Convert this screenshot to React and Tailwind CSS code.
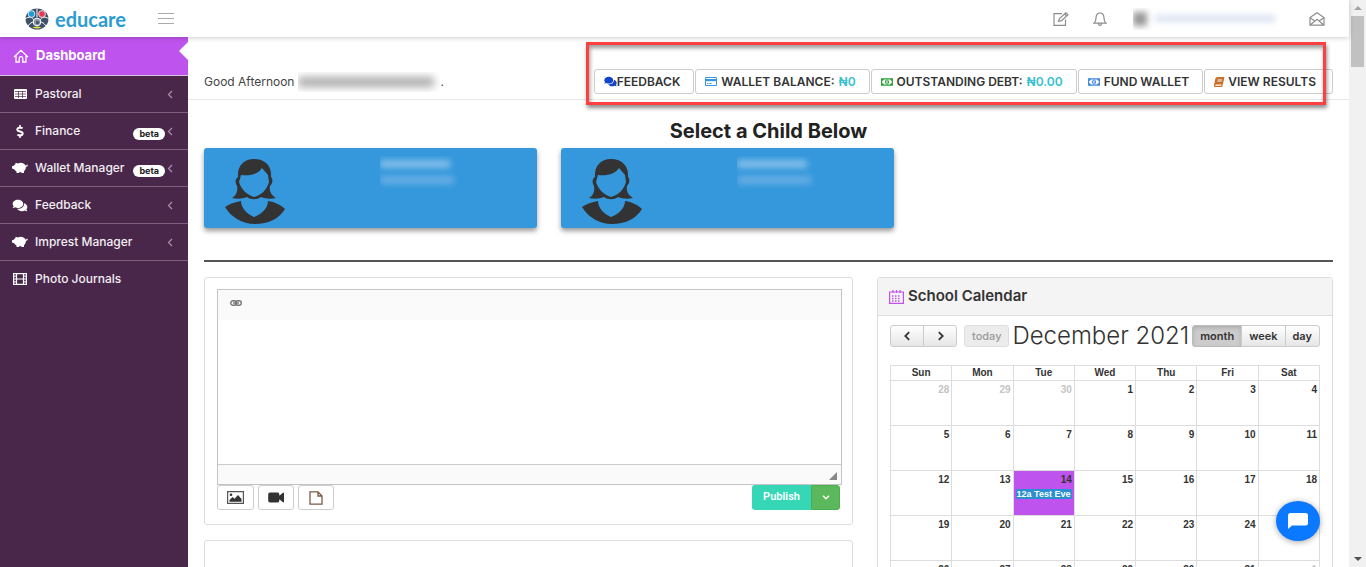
import React, { useState } from "react";
import { FaComments, FaDollarSign, FaBook } from "react-icons/fa";

const HomeIcon = () => (
  <svg viewBox="0 0 16 16" className="w-4 h-4" fill="none" stroke="currentColor" strokeWidth="1.3">
    <path d="M1 9 8 2.3 15 9M3 7.5V14h3.2v-3.6a1.8 1.8 0 0 1 3.6 0V14H13V7.5" />
  </svg>
);

const TableIcon = () => (
  <svg viewBox="0 0 13 10" className="w-[13px] h-[10px]">
    <rect width="13" height="10" rx="1" fill="currentColor" />
    <path stroke="#49274a" strokeWidth=".7" d="M1 2.500h11M1 5h11M1 7.500h11M4.500 2v7M8.500 2v7" />
  </svg>
);

const PiggyIcon = () => (
  <svg viewBox="0 0 16 12" className="w-4 h-3" fill="currentColor">
    <path d="M3.500.8 6 1.600C8 .2 12 .6 13.500 3.400c.7.4 1.300 0 1.300-.8l1 .3c0 1.200-.8 1.900-1.900 1.900 0 2-.7 3.400-1.900 4.500V11H9.500v-.7H7V11H4.500V9.600C3.500 9 2.700 8.200 2.200 7.300L0 6.500V4.200l1.800-.4c.5-.8 1-1.300 1.700-1.700Z" />
  </svg>
);

const FilmIcon = () => (
  <svg viewBox="0 0 14 12" className="w-[14px] h-3">
    <path fill="none" stroke="currentColor" strokeWidth="1.200" d="M.6.6h12.800v10.800H.6ZM3.500.6v10.800M10.500.6v10.800M3.500 6h7" />
    <path stroke="currentColor" strokeWidth="1" d="M.6 3.200h2.900M.6 6h2.900M.6 8.800h2.900M10.500 3.200h2.900M10.500 6h2.900M10.500 8.800h2.900" />
  </svg>
);

const VideoIcon = () => (
  <svg viewBox="0 0 16 11" className="w-4 h-[11px]" fill="#333">
    <path d="M2 .5h7.500a1.800 1.800 0 0 1 1.800 1.800v1.500L15 .8h1v9.400h-1l-3.700-3v1.500a1.800 1.800 0 0 1-1.800 1.800H2A1.800 1.800 0 0 1 .2 8.700V2.300A1.800 1.800 0 0 1 2 .5Z" />
  </svg>
);

const Chevron = ({ className, d = "M5 1 1.500 4.500 5 8" }) => (
  <svg viewBox="0 0 7 9" className={className} fill="none" stroke="currentColor" strokeWidth="1.200">
    <path d={d} />
  </svg>
);

const MoneyIcon = ({ className }) => (
  <svg viewBox="0 0 16 10" className={`mr-1 w-3 h-2 shrink-0 ${className}`}>
    <path fill="none" stroke="currentColor" strokeWidth="1.500" d="M.8.8h14.400v8.400H.8Z" />
    <path fill="currentColor" d="M1 1h3a3 3 0 0 1-3 2.500ZM15 1h-3a3 3 0 0 0 3 2.500ZM1 9h3a3 3 0 0 0-3-2.500ZM15 9h-3a3 3 0 0 1 3-2.500Z" />
    <ellipse cx="8" cy="5" rx="2.200" ry="2.800" fill="none" stroke="currentColor" strokeWidth="1.200" />
    <path stroke="currentColor" strokeWidth="1.200" d="M8 3.500v3" />
  </svg>
);

const CardIcon = () => (
  <svg viewBox="0 0 12 9" className="mr-1 w-3 h-[9px] shrink-0 text-[#3598dc]">
    <path fill="none" stroke="currentColor" d="M.5.5h11v8H.5ZM2 6.500h1.500M4.500 6.500h2" />
    <path fill="currentColor" d="M0 2h12v2.200H0z" />
  </svg>
);

const Logo = () => (
  <svg viewBox="0 0 24 22" className="w-6 h-[22px]">
    <ellipse cx="12" cy="11" rx="11.500" ry="10.500" fill="#3d5068" />
    <path stroke="#fff" strokeWidth="1" fill="none" d="M12 .5v9M0 11c4-3 7-2 9 1M24 11c-4-3-7-2-9 1M3 18c2-3 4-4 6-4M21 18c-2-3-4-4-6-4" />
    <circle cx="6.500" cy="6" r="3.400" fill="#1f9ad6" stroke="#fff" strokeWidth=".8" />
    <circle cx="17" cy="6" r="3.400" fill="#e8384f" stroke="#fff" strokeWidth=".8" />
    <circle cx="12" cy="14" r="3.800" fill="#8795a5" stroke="#fff" strokeWidth="1" />
    <circle cx="12.500" cy="14.500" r="1.600" fill="#3d5068" />
    <path fill="#e9dc3c" d="M7.500 19.500c3-1.500 6-1.500 9 0a11 10 0 0 1-9 0Z" />
  </svg>
);

const Avatar = () => (
  <svg viewBox="0 0 62 68" className="w-[62px] h-[68px]" fill="#333">
    <path d="M1 51c4-3 10-5 16-6 0 7 6 13 13 16 8-3 14-9 14-16 7 1 13 4 17 8-6 10-17 15-30 15C18 68 7 61 1 51Z" />
    <path
      fillRule="evenodd"
      d="M30 3c11 0 18 7 17 18 2 2 2 6-1 9-1 5 1 9 6 12-5 1-10 1-15-1-4 3-10 3-14 0-5 2-10 2-15 1 4-2 6-7 5-12-2-3-2-7 1-9C13 10 20 3 30 3Zm8 9c-4 6-11 8-21 7l-2 7c2 7 8 13 15 15 8-2 13-8 15-15l-1-7Z"
    />
  </svg>
);

const menu = [
  { label: "Pastoral", icon: <TableIcon />, sub: true },
  { label: "Finance", icon: <FaDollarSign className="w-[14px] h-[13px]" />, beta: true, sub: true },
  { label: "Wallet Manager", icon: <PiggyIcon />, beta: true, sub: true },
  { label: "Feedback", icon: <FaComments className="w-4 h-[13px]" />, sub: true },
  { label: "Imprest Manager", icon: <PiggyIcon />, sub: true },
  { label: "Photo Journals", icon: <FilmIcon /> },
];

const actions = [
  { label: "FEEDBACK", icon: <FaComments className="shrink-0 w-[13px] h-[11px] text-[#1145c9]" /> },
  { label: "WALLET BALANCE:", amount: "₦0", icon: <CardIcon /> },
  { label: "OUTSTANDING DEBT:", amount: "₦0.00", icon: <MoneyIcon className="text-[#26a033]" /> },
  { label: "FUND WALLET", icon: <MoneyIcon className="text-[#3f86d8]" /> },
  { label: "VIEW RESULTS", icon: <FaBook className="mr-1 w-[10px] h-[10px] -skew-x-12 text-[#c8702a]" /> },
];

const weekdays = ["Sun", "Mon", "Tue", "Wed", "Thu", "Fri", "Sat"];

const weeks = [
  [28, 29, 30, 1, 2, 3, 4],
  [5, 6, 7, 8, 9, 10, 11],
  [12, 13, 14, 15, 16, 17, 18],
  [19, 20, 21, 22, 23, 24, 25],
  [26, 27, 28, 29, 30, 31, 1],
];

const isOtherMonth = (week, day) => (week === 0 && day > 20) || (week === 4 && day < 10);

const Header = () => (
  <header className="relative z-10 h-[37px] shrink-0 flex items-center pl-[25px] pr-6 bg-white shadow-[0_1px_5px_rgba(0,0,0,0.2)]">
    <a href="#home" className="flex items-center gap-1.5">
      <Logo />
      <span className="font-['Lato'] font-bold text-[20px] leading-6 text-[#2a9cd3]">educare</span>
    </a>
    <button aria-label="Toggle menu" className="ml-8 w-4 h-[11px] flex flex-col justify-between">
      <span className="h-px w-full bg-[#aaa]" />
      <span className="h-px w-full bg-[#aaa]" />
      <span className="h-px w-full bg-[#aaa]" />
    </button>
    <div className="ml-auto flex items-center text-[#8d8d8d]">
      <button aria-label="Compose">
        <svg viewBox="0 0 16 14" className="w-4 h-[14px]" fill="none" stroke="currentColor" strokeWidth="1.200">
          <path d="M9 1.600H1v11.800h11.500V7.500M5.500 9.500l1-3L12.800.8l2.200 2L8.500 8.700ZM11.500 2l2.200 2" />
        </svg>
      </button>
      <button aria-label="Notifications" className="ml-6">
        <svg viewBox="0 0 14 14" className="w-[14px] h-[14px]" fill="none" stroke="currentColor" strokeWidth="1.200">
          <path d="M1 11.200h12c-1.500-1.300-2-2.500-2-5.200C11 3 9.500 1 7 1S3 3 3 6c0 2.700-.5 3.900-2 5.200ZM5.500 11.400c0 2.600 3 2.600 3 0" />
        </svg>
      </button>
      <div className="ml-[26px] w-[160px] h-[22px] flex items-center overflow-hidden">
        <span className="w-[14px] h-[14px] bg-[#999] blur-[3px]" />
        <span className="ml-2 w-[120px] h-[7px] bg-[#dbe2f2] blur-[3px]" />
      </div>
      <button aria-label="Messages" className="ml-4">
        <svg viewBox="0 0 16 14" className="w-4 h-[14px]" fill="none" stroke="currentColor" strokeWidth="1.200">
          <path d="M1 5.500 8 .8l7 4.700v7.700H1ZM1 5.800l4.500 3M15 5.800l-4.500 3M1.500 12.800 8 7.300l6.500 5.500" />
        </svg>
      </button>
    </div>
  </header>
);

const Sidebar = () => (
  <nav className="w-[188px] shrink-0 bg-[#49274a] text-white">
    <a href="#dashboard" className="relative flex items-center gap-[7px] h-[38px] pl-[13px] bg-[#be53ed] text-[13px] font-bold">
      <HomeIcon />
      Dashboard
      <svg viewBox="0 0 9 18" className="absolute right-0 top-[5px] w-[9px] h-[18px]" fill="#fff">
        <path d="M9 0v18L0 9Z" />
      </svg>
    </a>
    <ul>
      {menu.map((item) => (
        <li key={item.label} className="border-t border-[#7d5f7e] first:border-[#d9c4dd]">
          <a href="#menu" className="flex items-center h-9 pl-3 pr-3.5 text-xs font-medium text-[#f3eef3]">
            <span className="w-4 mr-[7px] flex justify-center text-white">{item.icon}</span>
            {item.label}
            <span className="ml-auto flex items-center">
              {item.beta && (
                <span className="mt-1.5 mr-0.5 h-3 px-1.5 rounded-full bg-white text-[9px] leading-3 font-bold text-[#222]">beta</span>
              )}
              {item.sub && <Chevron className="w-[7px] h-[9px] text-[#a893a8]" />}
            </span>
          </a>
        </li>
      ))}
    </ul>
  </nav>
);

const Editor = () => (
  <div className="rounded-[3px] border border-[#ddd] pl-3 pr-[10px] pt-[11px] pb-[14px] bg-white">
    <div className="border border-[#c4c4c4]">
      <div className="h-[30px] px-3 pb-1 flex items-center bg-[#fafafa]">
        <button aria-label="Insert link">
          <svg viewBox="0 0 12 6" className="w-3 h-1.5" fill="none" stroke="#777" strokeWidth="1.400">
            <rect x=".7" y=".7" width="5.800" height="4.600" rx="2.300" />
            <rect x="5.500" y=".7" width="5.800" height="4.600" rx="2.300" />
            <path d="M3 3h6" />
          </svg>
        </button>
      </div>
      <textarea aria-label="Write a post" className="block w-full h-36 resize-none bg-white text-xs outline-none" />
      <div className="h-5 flex items-end justify-end p-1 bg-[#fafafa] border-t border-[#ccc]">
        <svg viewBox="0 0 8 8" className="w-2 h-2" fill="#888">
          <path d="M8 0v8H0Z" />
        </svg>
      </div>
    </div>
    <div className="flex justify-between">
      <div className="flex gap-1">
        <button aria-label="Add picture" className={mediaClass}>
          <svg viewBox="0 0 17 13" className="w-[17px] h-[13px]">
            <path fill="#fff" stroke="#555" strokeWidth="1.200" d="M.6.6h15.800v11.800H.6Z" />
            <path fill="#333" d="M2.500 10.800V9l3-3 2 1.800L11 4l3.500 4v2.800Z" />
            <circle cx="4" cy="3.800" r="1.300" fill="#333" />
          </svg>
        </button>
        <button aria-label="Add video" className={mediaClass}>
          <VideoIcon />
        </button>
        <button aria-label="Add file" className={mediaClass}>
          <svg viewBox="0 0 14 14" className="w-[14px] h-[14px]" fill="#fff" stroke="#7a5a45" strokeWidth="1.300">
            <path d="M1 .8h8L13 5v8.200H1ZM9 .8V5h4" />
          </svg>
        </button>
      </div>
      <div className="flex mr-0.5 h-[25px] text-white">
        <button className="px-[11px] rounded-l-[3px] bg-[#36d7b7] text-[11px] font-semibold font-['Roboto']">Publish</button>
        <button aria-label="More publish options" className="w-[29px] flex items-center justify-center rounded-r-[3px] bg-[#5cb85c] border border-[#4cae4c]">
          <svg viewBox="0 0 8 5" className="w-2 h-[5px]" fill="none" stroke="currentColor" strokeWidth="1.300">
            <path d="m1 .8 3 3 3-3" />
          </svg>
        </button>
      </div>
    </div>
  </div>
);

const Calendar = () => {
  const [view, setView] = useState("month");

  return (
    <div className="rounded-t-[3px] border border-[#ddd] bg-white">
      <div className="h-[38px] px-[11px] flex items-center gap-1 bg-[#f4f4f4] border-b border-[#ddd]">
        <svg viewBox="0 0 15 14" className="w-[15px] h-[14px]" fill="none" stroke="#be53ed" strokeWidth="1.200">
          <path d="M.6 2h13.800v11.400H.6ZM4 0v3M7.500 0v3M11 0v3" />
          <path strokeWidth="1.500" strokeDasharray="1.500 1.500" d="M3 6h9M3 8.500h9M3 11h9" />
        </svg>
        <h2 className="text-[15px] font-semibold text-[#333]">School Calendar</h2>
      </div>
      <div className="px-3 pt-[9px]">
        <div className="flex items-center justify-between h-[22px]">
          <div className="flex">
            <button aria-label="Previous month" className={`${calButton} w-[34px] rounded-l-[3px]`}>
              <Chevron className="w-[9px] h-[10px] [stroke-width:1.600]" />
            </button>
            <button aria-label="Next month" className={`${calButton} w-[34px] -ml-px rounded-r-[3px]`}>
              <Chevron className="w-[9px] h-[10px] [stroke-width:1.600]" d="M2 1l3.500 3.500L2 8" />
            </button>
            <button className="ml-[7px] h-[22px] px-[7px] rounded-[3px] border border-[#ddd] bg-[#ececec] text-[11px] font-medium text-[#999]">
              today
            </button>
          </div>
          <h2 className="text-2xl font-light whitespace-nowrap text-[#333]">December 2021</h2>
          <div className="flex">
            {["month", "week", "day"].map((name) => (
              <button
                key={name}
                onClick={() => setView(name)}
                className={`${view === name ? calActive : calButton} px-[7px] -ml-px first:ml-0 first:rounded-l-[3px] last:rounded-r-[3px]`}
              >
                {name}
              </button>
            ))}
          </div>
        </div>
        <table className="mt-[18px] w-full table-fixed border-collapse font-['Liberation_Sans'] text-[10px] font-bold text-[#333]">
          <thead>
            <tr className="h-[15px]">
              {weekdays.map((name) => (
                <th key={name} className="p-0 border border-[#ddd] leading-[14px]">{name}</th>
              ))}
            </tr>
          </thead>
          <tbody>
            {weeks.map((week, w) => (
              <tr key={w} className="h-[45px]">
                {week.map((day) => {
                  const today = w === 2 && day === 14;
                  return (
                    <td key={day} className={`p-0.5 align-top border border-[#ddd] leading-[14px] ${today ? "bg-[#be53ed]" : ""}`}>
                      <div className={`text-right ${isOtherMonth(w, day) ? "text-[#c4c4c4]" : ""}`}>{day}</div>
                      {today && (
                        <a href="#event" className="block mt-0.5 h-[10px] px-px whitespace-nowrap rounded-[2px] bg-[#2a8fd0] text-[9px] leading-[10px] text-white">
                          12a Test Eve
                        </a>
                      )}
                    </td>
                  );
                })}
              </tr>
            ))}
          </tbody>
        </table>
      </div>
    </div>
  );
};

const ChildCard = () => (
  <button aria-label="Select child" className="w-[333px] h-20 flex items-start pl-5 pt-2 rounded-[3px] bg-[#3598dc] shadow-[0_3px_5px_rgba(0,0,0,0.4)]">
    <Avatar />
    <span className="ml-[94px] w-20 h-9 py-1 flex flex-col gap-2 overflow-hidden">
      <span className="w-[70px] h-2 bg-[#84bfea] blur-[3px]" />
      <span className="w-[74px] h-2 bg-[#68aee5] blur-[3px]" />
    </span>
  </button>
);

const Scrollbar = () => (
  <div aria-hidden="true" className="w-[17px] shrink-0 flex flex-col items-center bg-[#f1f1f1]">
    <svg viewBox="0 0 8 4" className="my-[6px] w-2 h-1 shrink-0" fill="#a3a3a3"><path d="M0 4 4 0l4 4Z" /></svg>
    <div className="w-[13px] h-[51px] bg-[#c1c1c1]" />
    <svg viewBox="0 0 8 4" className="mt-auto mb-[6px] w-2 h-1 shrink-0" fill="#505050"><path d="M0 0l4 4 4-4Z" /></svg>
  </div>
);

const App = () => {
  return (
    <div className="h-screen flex overflow-hidden bg-white font-['Inter',sans-serif]">
      <div className="flex-1 min-w-0 flex flex-col">
        <Header />
        <div className="flex-1 min-h-0 flex">
          <Sidebar />
          <main className="flex-1 min-w-0 overflow-hidden">
            {/* Greeting and account actions */}
            <div className="relative flex items-center justify-between px-4 pt-8 pb-[5px] border-b border-[#e8e8e8]">
              <p className="flex items-center text-xs text-[#444]">
                Good Afternoon
                <span className="ml-1 w-[142px] h-5 flex items-center overflow-hidden">
                  <span className="w-[136px] h-2.5 bg-[#aaa] blur-[4px]" />
                </span>
                .
              </p>
              <div className="flex gap-px">
                {actions.map((action) => (
                  <button key={action.label} className="h-[25px] pl-[9px] pr-[13px] last:pr-4 flex items-center rounded-[3px] border border-[#ccc] bg-white text-xs font-semibold whitespace-nowrap text-[#333]">
                    {action.icon}
                    {action.label}
                    {action.amount && <span className="ml-1 text-[#36c0d0]">{action.amount}</span>}
                  </button>
                ))}
              </div>
              <div className="absolute top-[5px] right-[23px] w-[740px] h-[63px] border-[3px] border-[#ff4040] shadow-[1px_3px_4px_rgba(0,0,0,0.45),inset_1px_3px_4px_rgba(0,0,0,0.4)] pointer-events-none" />
            </div>

            <div className="px-4">
              <h1 className="pt-[19px] pb-[5px] text-center text-xl leading-6 font-bold text-[#222]">Select a Child Below</h1>
              <div className="flex gap-6">
                <ChildCard />
                <ChildCard />
              </div>
              <hr className="mt-8 mb-[15px] border-t-2 border-[#555]" />
              <div className="grid grid-cols-[649fr_456fr] gap-6">
                <div>
                  <Editor />
                  <div className="mt-[15px] h-40 rounded-[3px] border border-[#ddd] bg-white" />
                </div>
                <Calendar />
              </div>
            </div>
          </main>
        </div>
      </div>
      <Scrollbar />

      {/* Chat launcher */}
      <button aria-label="Open chat" className="fixed right-[46px] bottom-[26px] w-11 h-10 flex items-center justify-center rounded-[50%] bg-[#0a78ff] shadow-[0_1px_6px_rgba(0,0,0,0.35)]">
        <svg viewBox="0 0 20 16" className="w-5 h-4" fill="#fff">
          <path d="M2.500 0h15A2.500 2.500 0 0 1 20 2.500v7.500a2.500 2.500 0 0 1-2.500 2.500H4L0 16V2.500A2.500 2.500 0 0 1 2.500 0Z" />
        </svg>
      </button>
    </div>
  );
};

const mediaClass = "h-[25px] px-[9px] min-w-9 flex items-center justify-center rounded-[3px] border border-[#ccc] bg-white";

const calButton =
  "h-[22px] flex items-center justify-center border border-[#ccc] bg-linear-to-b from-white to-[#e6e6e6] text-[11px] font-semibold text-[#333]";

const calActive =
  "h-[22px] flex items-center justify-center border border-[#bbb] bg-[#ccc] shadow-[inset_0_2px_4px_rgba(0,0,0,0.15)] text-[11px] font-semibold text-[#333]";

export default App;
